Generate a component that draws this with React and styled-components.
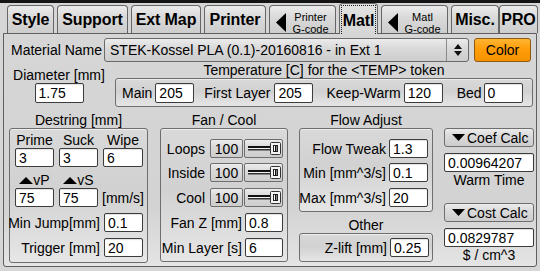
import React from "react";
import styled, { createGlobalStyle, css } from "styled-components";

const GlobalStyle = createGlobalStyle`
  html, body {
    margin: 0;
    padding: 0;
    background: #d4d4d4;
  }
  * {
    box-sizing: border-box;
  }
`;

const raised = css`
  background: linear-gradient(to bottom, #ececec 0%, #dadada 40%, #cdcdcd 100%);
`;

const groupShade = css`
  background: linear-gradient(to bottom, #d9d9d9 0%, #d1d1d1 45%, #e6e6e6 100%);
`;

const Screen = styled.div`
  width: 540px;
  height: 271px;
  overflow: hidden;
  background: #d6d6d6;
  font-family: "Liberation Sans", Arial, sans-serif;
  font-size: 14px;
  line-height: 16px;
  color: #000;
`;

const TopStrip = styled.div`
  height: 3px;
  background: #141414;
`;

const TabBar = styled.div`
  display: flex;
  align-items: flex-end;
  gap: 3px;
  height: 30px;
  padding-left: 7px;
`;

const Tab = styled.div`
  position: relative;
  z-index: ${p => (p.$active ? 2 : 1)};
  width: ${p => p.$w}px;
  height: ${p => (p.$active ? 31 : 28)}px;
  margin-left: ${p => p.$ml || 0}px;
  margin-bottom: ${p => (p.$active ? -1 : 0)}px;
  border: 1px solid #666;
  border-bottom: none;
  border-radius: 4px 4px 0 0;
  ${p =>
    p.$active
      ? css`background: linear-gradient(to bottom, #e2e2e2 0%, #d6d6d6 100%);`
      : raised}
  display: flex;
  align-items: stretch;
  padding: ${p => (p.$active ? "1px 1px 0" : "0")};
`;

const TabText = styled.span`
  flex: 1;
  display: flex;
  align-items: center;
  justify-content: center;
  padding-top: 1px;
  font-weight: bold;
  font-size: 16px;
  letter-spacing: -0.1px;
  border: ${p => (p.$focus ? "1px dotted #222" : "none")};
  border-bottom: none;
`;

const TabArrow = styled.svg`
  flex: none;
  margin: 7px 0 0 6px;
`;

const TabSmall = styled.span`
  flex: 1;
  display: flex;
  flex-direction: column;
  align-items: center;
  padding-top: 5px;
  font-size: 11px;
  line-height: 12px;
`;

const Panel = styled.div`
  margin-left: 3px;
  width: 534px;
  height: 234px;
  border: 1px solid #5e5e5e;
  border-radius: 0 0 3px 3px;
  background: linear-gradient(to bottom, #d6d6d6 0%, #d3d3d3 75%, #e4e4e4 100%);
`;

const MaterialRow = styled.div`
  display: flex;
  align-items: center;
  height: 24px;
  margin-top: 4px;
  padding-left: 7px;
`;

const MatLabel = styled.span`
  width: 93px;
  white-space: nowrap;
`;

const Select = styled.div`
  width: 365px;
  height: 24px;
  display: flex;
  align-items: stretch;
  border: 1px solid #6a6a6a;
  border-radius: 3px;
  ${raised}
`;

const SelectText = styled.span`
  flex: 1;
  display: flex;
  align-items: center;
  padding-left: 5px;
  white-space: nowrap;
`;

const SelectArrows = styled.span`
  width: 22px;
  display: flex;
  align-items: center;
  justify-content: center;
  border-left: 1px solid #8a8a8a;
`;

const ColorButton = styled.div`
  width: 57px;
  height: 24px;
  margin-left: 5px;
  display: flex;
  align-items: center;
  justify-content: center;
  border: 1px solid #8c5a10;
  border-radius: 3px;
  background: linear-gradient(to bottom, #ffb533 0%, #ff9d0a 45%, #f49200 100%);
`;

const MidRow = styled.div`
  display: flex;
`;

const DiameterCol = styled.div`
  width: 90px;
  margin-left: 10px;
  padding-top: 5px;
  display: flex;
  flex-direction: column;
  align-items: center;
`;

const Caption = styled.div`
  text-align: center;
  white-space: nowrap;
  height: 16px;
`;

const TempCol = styled.div`
  width: 418px;
  margin-left: 11px;
`;

const GroupBox = styled.div`
  height: ${p => p.$h}px;
  border: 1px solid #6e6e6e;
  border-radius: 3px;
  box-shadow: inset 0 1px 0 #ededed;
  ${groupShade}
`;

const TempBox = styled(GroupBox)`
  display: flex;
  align-items: center;
  padding-left: 6px;
`;

const Field = styled.div`
  display: flex;
  align-items: center;
  gap: ${p => p.$gap ?? 3}px;
  margin-left: ${p => p.$ml || 0}px;
  white-space: nowrap;
`;

const Input = styled.input`
  width: ${p => p.$w || 39}px;
  height: ${p => p.$h || 19}px;
  margin: 0;
  padding: 0 3px;
  border: 1px solid #3c3c3c;
  border-radius: 2px;
  background: #fff;
  box-shadow: inset 0 1px 1px rgba(0, 0, 0, 0.12);
  font: inherit;
  font-size: 14px;
  color: #000;
  outline: none;
`;

const LowerRow = styled.div`
  display: flex;
  margin-top: 5px;
  padding-left: 5px;
`;

const Column = styled.div`
  width: ${p => p.$w}px;
  margin-left: ${p => p.$ml || 0}px;
  display: flex;
  flex-direction: column;
`;

const DestringBox = styled(GroupBox)`
  padding: 3px 4px 0 5px;
`;

const CellRow = styled.div`
  display: flex;
  gap: 5px;
  margin-top: ${p => p.$mt || 0}px;
`;

const Cell = styled.div`
  width: ${p => p.$w || 39}px;
  height: ${p => p.$h || 16}px;
  display: flex;
  align-items: center;
  justify-content: center;
  white-space: nowrap;
`;

const RightRow = styled.div`
  display: flex;
  align-items: center;
  justify-content: flex-end;
  height: 19px;
  margin-top: ${p => p.$mt || 0}px;
  white-space: nowrap;
`;

const RowLabel = styled.span`
  margin-right: ${p => p.$mr ?? 4}px;
`;

const StackBox = styled(GroupBox)`
  padding: 10px 4px 0 0;
`;

const ValueBtn = styled.div`
  width: 33px;
  height: 19px;
  display: flex;
  align-items: center;
  justify-content: center;
  border: 1px solid #6e6e6e;
  border-radius: 2px;
  ${raised}
`;

const SliderBox = styled.div`
  width: 39px;
  height: 19px;
  margin-left: 1px;
  border: 1px solid #6e6e6e;
  border-radius: 2px;
  ${raised}
  display: flex;
`;

const ZBox = styled(GroupBox)`
  display: flex;
  align-items: center;
  justify-content: flex-end;
  padding-right: 3px;
`;

const CalcCol = styled(Column)`
  padding-top: 16px;
`;

const CalcButton = styled.div`
  height: 19px;
  margin-top: ${p => p.$mt || 0}px;
  display: flex;
  align-items: center;
  gap: 2px;
  padding-left: 7px;
  border: 1px solid #6e6e6e;
  border-radius: 3px;
  ${raised}
  white-space: nowrap;
`;

const CalcInput = styled(Input)`
  width: 90px;
  margin-top: 6px;
`;

const Arrows = () => (
  <svg width="8" height="12" viewBox="0 0 8 12">
    <polygon points="0,5 4,0 8,5" fill="#111" />
    <polygon points="0,7 4,12 8,7" fill="#111" />
  </svg>
);

const LeftTriangle = () => (
  <TabArrow width="10" height="19" viewBox="0 0 10 19">
    <polygon points="10,0 0,9.5 10,19" fill="#000" />
  </TabArrow>
);

const Up = () => (
  <svg width="14" height="8" viewBox="0 0 14 8" style={{ marginTop: 1 }}>
    <polygon points="0,7 7,0 14,7" fill="#000" />
  </svg>
);

const Down = () => (
  <svg width="13" height="7" viewBox="0 0 13 7">
    <polygon points="0,0 13,0 6.5,7" fill="#000" />
  </svg>
);

const SliderArt = () => (
  <svg width="37" height="17" viewBox="0 0 37 17">
    <rect x="3" y="6" width="22" height="2" fill="#111" />
    <rect x="3" y="8" width="22" height="1" fill="#f2f2f2" />
    <rect x="3" y="9" width="22" height="1.5" fill="#333" />
    <rect x="25.5" y="2.5" width="10" height="12" rx="1" fill="#f3f3f3" stroke="#333" />
    <rect x="28.5" y="5.5" width="4" height="6" fill="#fff" stroke="#222" />
    <rect x="30" y="5.5" width="1.5" height="6" fill="#111" />
  </svg>
);

const fanRows = [
  { label: "Loops", mt: 0 },
  { label: "Inside", mt: 5 },
  { label: "Cool", mt: 6 }
];

const flowRows = [
  { label: "Flow Tweak", value: "1.3", mt: 0 },
  { label: "Min [mm^3/s]", value: "0.1", mt: 5 },
  { label: "Max [mm^3/s]", value: "20", mt: 6 }
];

const SmallTab = ({ w, top, bottom }) => (
  <Tab $w={w}>
    <LeftTriangle />
    <TabSmall>
      <span>{top}</span>
      <span>{bottom}</span>
    </TabSmall>
  </Tab>
);

export default function App() {
  return (
    <Screen>
      <GlobalStyle />
      <TopStrip />
      <TabBar>
        <Tab $w={47}><TabText>Style</TabText></Tab>
        <Tab $w={71}><TabText>Support</TabText></Tab>
        <Tab $w={70}><TabText>Ext Map</TabText></Tab>
        <Tab $w={62}><TabText>Printer</TabText></Tab>
        <SmallTab w={67} top="Printer" bottom="G-code" />
        <Tab $w={39} $active><TabText $focus>Matl</TabText></Tab>
        <SmallTab w={67} top="Matl" bottom="G-code" />
        <Tab $w={48}><TabText>Misc.</TabText></Tab>
        <Tab $w={39} $ml={-3}><TabText>PRO</TabText></Tab>
      </TabBar>
      <Panel>
        <MaterialRow>
          <MatLabel>Material Name</MatLabel>
          <Select>
            <SelectText>STEK-Kossel PLA (0.1)-20160816 - in Ext 1</SelectText>
            <SelectArrows><Arrows /></SelectArrows>
          </Select>
          <ColorButton>Color</ColorButton>
        </MaterialRow>

        <MidRow>
          <DiameterCol>
            <Caption>Diameter [mm]</Caption>
            <Input $w={49} $h={20} defaultValue="1.75" readOnly />
          </DiameterCol>
          <TempCol>
            <Caption>Temperature [C] for the &lt;TEMP&gt; token</Caption>
            <TempBox $h={29}>
              <Field>
                <span>Main</span>
                <Input $h={20} defaultValue="205" readOnly />
              </Field>
              <Field $ml={10} $gap={4}>
                <span>First Layer</span>
                <Input $h={20} defaultValue="205" readOnly />
              </Field>
              <Field $ml={13}>
                <span>Keep-Warm</span>
                <Input $h={20} defaultValue="120" readOnly />
              </Field>
              <Field $ml={14} $gap={2}>
                <span>Bed</span>
                <Input $h={20} defaultValue="0" readOnly />
              </Field>
            </TempBox>
          </TempCol>
        </MidRow>

        <LowerRow>
          <Column $w={139}>
            <Caption>Destring [mm]</Caption>
            <DestringBox $h={135}>
              <CellRow>
                <Cell>Prime</Cell>
                <Cell>Suck</Cell>
                <Cell $w={40}>Wipe</Cell>
              </CellRow>
              <CellRow>
                <Input defaultValue="3" readOnly />
                <Input defaultValue="3" readOnly />
                <Input $w={40} defaultValue="6" readOnly />
              </CellRow>
              <CellRow $mt={5}>
                <Cell><Up />vP</Cell>
                <Cell><Up />vS</Cell>
              </CellRow>
              <CellRow>
                <Input defaultValue="75" readOnly />
                <Input defaultValue="75" readOnly />
                <Cell $w={40} $h={19}>[mm/s]</Cell>
              </CellRow>
              <RightRow $mt={6}>
                <RowLabel>Min Jump[mm]</RowLabel>
                <Input defaultValue="0.1" readOnly />
              </RightRow>
              <RightRow $mt={6}>
                <RowLabel>Trigger [mm]</RowLabel>
                <Input defaultValue="20" readOnly />
              </RightRow>
            </DestringBox>
          </Column>

          <Column $w={128} $ml={12}>
            <Caption>Fan / Cool</Caption>
            <StackBox $h={134}>
              {fanRows.map(row => (
                <RightRow key={row.label} $mt={row.mt}>
                  <RowLabel $mr={5}>{row.label}</RowLabel>
                  <ValueBtn>100</ValueBtn>
                  <SliderBox><SliderArt /></SliderBox>
                </RightRow>
              ))}
              <RightRow $mt={6}>
                <RowLabel $mr={3}>Fan Z [mm]</RowLabel>
                <Input $w={38} defaultValue="0.8" readOnly />
              </RightRow>
              <RightRow $mt={6}>
                <RowLabel $mr={3}>Min Layer [s]</RowLabel>
                <Input $w={38} defaultValue="6" readOnly />
              </RightRow>
            </StackBox>
          </Column>

          <Column $w={134} $ml={11}>
            <Caption>Flow Adjust</Caption>
            <StackBox $h={84}>
              {flowRows.map(row => (
                <RightRow key={row.label} $mt={row.mt}>
                  <RowLabel $mr={3}>{row.label}</RowLabel>
                  <Input defaultValue={row.value} readOnly />
                </RightRow>
              ))}
            </StackBox>
            <Caption style={{ marginTop: 5 }}>Other</Caption>
            <ZBox $h={29}>
              <RowLabel $mr={3}>Z-lift [mm]</RowLabel>
              <Input defaultValue="0.25" readOnly />
            </ZBox>
          </Column>

          <CalcCol $w={90} $ml={11}>
            <CalcButton><Down />Coef Calc</CalcButton>
            <CalcInput defaultValue="0.00964207" readOnly />
            <Caption>Warm Time</Caption>
            <CalcButton $mt={15}><Down />Cost Calc</CalcButton>
            <CalcInput defaultValue="0.0829787" readOnly />
            <Caption>$ / cm^3</Caption>
          </CalcCol>
        </LowerRow>
      </Panel>
    </Screen>
  );
}
